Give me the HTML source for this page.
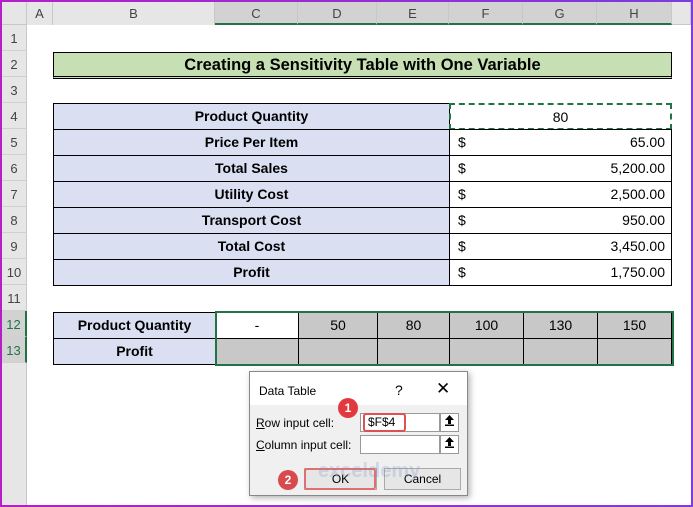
<!DOCTYPE html>
<html><head><style>
*{margin:0;padding:0;box-sizing:border-box}
body{width:693px;height:507px;overflow:hidden;background:linear-gradient(90deg,#b41fc8,#7b3ce0);font-family:"Liberation Sans",Calibri,sans-serif;position:relative}
#s{position:absolute;left:2px;top:2px;width:689px;height:503px;background:#fff;overflow:hidden}
.a{position:absolute}
.hd{background:#e6e6e6;color:#444;font-size:13px;text-align:center;line-height:23px;border-right:1px solid #c8c8c8}
.rh{position:absolute;left:0;width:25px;height:26px;background:#e6e6e6;border-bottom:1px solid #d0d0d0;border-right:1px solid #c8c8c8;color:#444;font-size:13px;text-align:center;line-height:28px}
.c{position:absolute;border:1px solid #000;font-size:14px;line-height:24px;text-align:center}
.b{font-weight:bold;background:#dae0f2}
.n{text-align:right;padding-right:6px}
.d{position:absolute;left:8px}
.up{position:absolute;width:19px;height:19px;background:#fff;border:1px solid #999;text-align:center;line-height:17px}
</style></head><body><div id="s">
<div class="a hd" style="left:0;top:0;width:25px;height:23px;border-bottom:1px solid #c8c8c8"></div>
<div class="a hd" style="left:25px;top:0;width:26px;height:23px">A</div>
<div class="a hd" style="left:51px;top:0;width:162px;height:23px">B</div>
<div class="a hd" style="left:213px;top:0;width:83px;height:23px;background:#d2d2d2;border-bottom:2px solid #217346">C</div>
<div class="a hd" style="left:296px;top:0;width:79px;height:23px;background:#d2d2d2;border-bottom:2px solid #217346">D</div>
<div class="a hd" style="left:375px;top:0;width:72px;height:23px;background:#d2d2d2;border-bottom:2px solid #217346">E</div>
<div class="a hd" style="left:447px;top:0;width:74px;height:23px;background:#d2d2d2;border-bottom:2px solid #217346">F</div>
<div class="a hd" style="left:521px;top:0;width:74px;height:23px;background:#d2d2d2;border-bottom:2px solid #217346">G</div>
<div class="a hd" style="left:595px;top:0;width:75px;height:23px;background:#d2d2d2;border-bottom:2px solid #217346">H</div>
<div class="a hd" style="left:670px;top:0;width:19px;height:23px;border-bottom:1px solid #c8c8c8"></div>
<div class="rh" style="top:23px">1</div><div class="rh" style="top:49px">2</div><div class="rh" style="top:75px">3</div><div class="rh" style="top:101px">4</div><div class="rh" style="top:127px">5</div><div class="rh" style="top:153px">6</div><div class="rh" style="top:179px">7</div><div class="rh" style="top:205px">8</div><div class="rh" style="top:231px">9</div><div class="rh" style="top:257px">10</div><div class="rh" style="top:283px">11</div>
<div class="rh" style="top:309px;background:#d2d2d2;color:#217346;border-right:2px solid #217346">12</div>
<div class="rh" style="top:335px;background:#d2d2d2;color:#217346;border-right:2px solid #217346">13</div>
<div class="rh" style="top:361px;height:142px;border-bottom:none"></div>
<div class="c" style="left:51px;top:50px;width:619px;height:27px;background:#c6e0b4;font-weight:bold;font-size:16.5px;border-bottom:3px double #000;line-height:24px">Creating a Sensitivity Table with One Variable</div>
<div class="c b" style="left:51px;top:101px;width:397px;height:27px">Product Quantity</div>
<div class="c" style="left:447px;top:101px;width:223px;height:27px;border:2px dashed #217346">80</div>
<div class="c b" style="left:51px;top:127px;width:397px;height:27px">Price Per Item</div><div class="c n" style="left:447px;top:127px;width:223px;height:27px"><span class="d">$</span>65.00</div>
<div class="c b" style="left:51px;top:153px;width:397px;height:27px">Total Sales</div><div class="c n" style="left:447px;top:153px;width:223px;height:27px"><span class="d">$</span>5,200.00</div>
<div class="c b" style="left:51px;top:179px;width:397px;height:27px">Utility Cost</div><div class="c n" style="left:447px;top:179px;width:223px;height:27px"><span class="d">$</span>2,500.00</div>
<div class="c b" style="left:51px;top:205px;width:397px;height:27px">Transport Cost</div><div class="c n" style="left:447px;top:205px;width:223px;height:27px"><span class="d">$</span>950.00</div>
<div class="c b" style="left:51px;top:231px;width:397px;height:27px">Total Cost</div><div class="c n" style="left:447px;top:231px;width:223px;height:27px"><span class="d">$</span>3,450.00</div>
<div class="c b" style="left:51px;top:257px;width:397px;height:27px">Profit</div><div class="c n" style="left:447px;top:257px;width:223px;height:27px"><span class="d">$</span>1,750.00</div>
<div class="c b" style="left:51px;top:310px;width:163px;height:27px">Product Quantity</div>
<div class="c b" style="left:51px;top:336px;width:163px;height:27px">Profit</div>
<div class="c" style="left:213px;top:310px;width:84px;height:27px">-</div>
<div class="c" style="left:296px;top:310px;width:80px;height:27px;background:#c8c8c8">50</div>
<div class="c" style="left:375px;top:310px;width:73px;height:27px;background:#c8c8c8">80</div>
<div class="c" style="left:447px;top:310px;width:75px;height:27px;background:#c8c8c8">100</div>
<div class="c" style="left:521px;top:310px;width:75px;height:27px;background:#c8c8c8">130</div>
<div class="c" style="left:595px;top:310px;width:75px;height:27px;background:#c8c8c8">150</div>
<div class="c" style="left:213px;top:336px;width:84px;height:27px;background:#c8c8c8"></div>
<div class="c" style="left:296px;top:336px;width:80px;height:27px;background:#c8c8c8"></div>
<div class="c" style="left:375px;top:336px;width:73px;height:27px;background:#c8c8c8"></div>
<div class="c" style="left:447px;top:336px;width:75px;height:27px;background:#c8c8c8"></div>
<div class="c" style="left:521px;top:336px;width:75px;height:27px;background:#c8c8c8"></div>
<div class="c" style="left:595px;top:336px;width:75px;height:27px;background:#c8c8c8"></div>
<div class="a" style="left:213px;top:309px;width:459px;height:55px;border:2px solid #217346"></div>
<div class="a" style="left:247px;top:369px;width:219px;height:125px;background:#f0f0f0;border:1px solid #888;box-shadow:2px 2px 6px rgba(0,0,0,.3);font-size:12px;color:#000">
 <div class="a" style="left:0;top:0;width:217px;height:33px;background:#fff"></div>
 <div class="a" style="left:9px;top:12px">Data Table</div>
 <div class="a" style="left:145px;top:10px;font-size:14px">?</div>
 <div class="a" style="left:186px;top:7px;font-size:17px">✕</div>
 <div class="a" style="left:6px;top:44px"><u>R</u>ow input cell:</div>
 <div class="a" style="left:6px;top:66px"><u>C</u>olumn input cell:</div>
 <div class="a" style="left:110px;top:41px;width:80px;height:19px;background:#fff;border:1px solid #999"></div>
 <div class="up" style="left:190px;top:41px"><svg width="11" height="12" viewBox="0 0 11 12"><path d="M5.5 1 L10 6 H7 V10 H4 V6 H1 Z" fill="#000"/><rect x="1" y="10.5" width="9" height="1.5" fill="#000"/></svg></div>
 <div class="a" style="left:110px;top:63px;width:80px;height:19px;background:#fff;border:1px solid #999"></div>
 <div class="up" style="left:190px;top:63px"><svg width="11" height="12" viewBox="0 0 11 12"><path d="M5.5 1 L10 6 H7 V10 H4 V6 H1 Z" fill="#000"/><rect x="1" y="10.5" width="9" height="1.5" fill="#000"/></svg></div>
 <div class="a" style="left:113px;top:41px;width:43px;height:19px;border:2px solid #e05050;border-radius:3px;line-height:15px;padding-left:3px">$F$4</div>
 <div class="a" style="left:88px;top:26px;width:20px;height:20px;border-radius:50%;background:#e0393e;color:#fff;font-weight:bold;text-align:center;line-height:20px">1</div>
 <div class="a" style="left:54px;top:96px;width:73px;height:22px;border:1px solid #aaa;background:#e6e6e6;text-align:center;line-height:20px">OK</div>
 <div class="a" style="left:54px;top:96px;width:72px;height:22px;border:2px solid #e07070;border-radius:3px"></div>
 <div class="a" style="left:134px;top:96px;width:77px;height:22px;border:1px solid #aaa;background:#e6e6e6;text-align:center;line-height:20px">Cancel</div>
 <div class="a" style="left:28px;top:98px;width:20px;height:20px;border-radius:50%;background:#d94a4e;color:#fff;font-weight:bold;text-align:center;line-height:20px">2</div>
 <div class="a" style="left:68px;top:88px;font-size:20px;font-weight:bold;color:rgba(120,140,200,.25)">exceldemy</div>
</div>
</div></body></html>
